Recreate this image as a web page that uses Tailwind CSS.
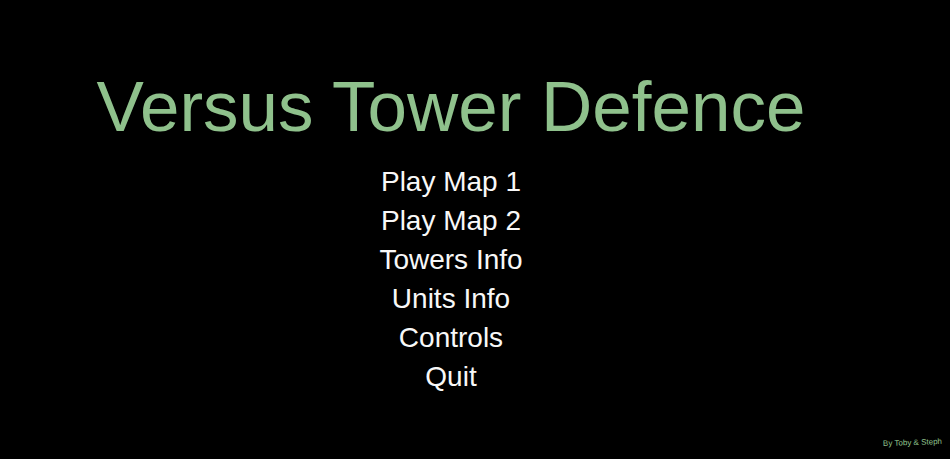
<!DOCTYPE html>
<html lang="en">
<head>
<meta charset="utf-8">
<title>Versus Tower Defence</title>
<script src="https://cdn.jsdelivr.net/npm/@tailwindcss/browser@4"></script>
</head>
<body class="bg-black text-[#f8f8f8] font-['Liberation_Sans',Arial,sans-serif]">
<div class="min-h-screen flex flex-col">
<main class="flex-1 flex flex-col items-center pt-16 pr-12">
<h1 class="text-[71px] leading-[86px] text-[#8fc18c] whitespace-nowrap">Versus Tower Defence</h1>
<nav aria-label="Main menu" class="mt-3 flex flex-col items-center text-[28px] leading-[39px]">
<button type="button" class="cursor-pointer">Play Map 1</button>
<button type="button" class="cursor-pointer">Play Map 2</button>
<button type="button" class="cursor-pointer">Towers Info</button>
<button type="button" class="cursor-pointer">Units Info</button>
<button type="button" class="cursor-pointer">Controls</button>
<button type="button" class="cursor-pointer">Quit</button>
</nav>
</main>
<footer class="flex justify-end pr-2 pb-2 text-[8px] leading-4 text-[#8fc18c]"><p class="-rotate-2">By Toby &amp; Steph</p></footer>
</div>
</body>
</html>
